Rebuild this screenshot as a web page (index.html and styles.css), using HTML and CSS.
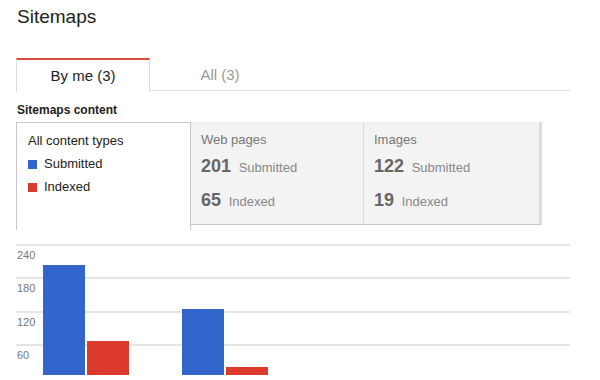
FILE: index.html
```html
<!DOCTYPE html>
<html lang="en" dir="ltr">
  <head>
    <meta charset="utf-8">
    <title>Sitemaps</title>
    <link rel="stylesheet" href="styles.css">
  </head>
  <body>
    <div class="Page">
      <h1 class="Page-Title">Sitemaps</h1>

      <div class="Tabs">
        <div class="Tab Tab-Active">By me (3)</div>
        <div class="Tab">All (3)</div>
      </div>

      <div class="Section-Title">Sitemaps content</div>

      <div class="Cards">
        <div class="Card Card-Active">
          <div class="Card-Label">All content types</div>
          <div class="Legend"><span class="Swatch Swatch-Blue"></span>Submitted</div>
          <div class="Legend"><span class="Swatch Swatch-Red"></span>Indexed</div>
        </div>
        <div class="Card Card-Pages">
          <div class="Card-Label">Web pages</div>
          <div class="Stat"><b>201</b> Submitted</div>
          <div class="Stat"><b>65</b> Indexed</div>
        </div>
        <div class="Card Card-Images">
          <div class="Card-Label">Images</div>
          <div class="Stat"><b>122</b> Submitted</div>
          <div class="Stat"><b>19</b> Indexed</div>
        </div>
      </div>

      <div class="Chart">
        <div class="Chart-Row">240</div>
        <div class="Chart-Row">180</div>
        <div class="Chart-Row">120</div>
        <div class="Chart-Row">60</div>
        <div class="Chart-Bars">
          <div class="Bar-Group">
            <div class="Bar Bar-Blue" style="height: 110px"></div>
            <div class="Bar Bar-Red" style="height: 34px"></div>
          </div>
          <div class="Bar-Group">
            <div class="Bar Bar-Blue" style="height: 66px"></div>
            <div class="Bar Bar-Red" style="height: 8px"></div>
          </div>
        </div>
      </div>
    </div>
  </body>
</html>
```

FILE: styles.css
```css
body {
  margin: 0;
  padding: 0;
  background: #fff;
  font-family: 'Liberation Sans', Arial, sans-serif;
  color: #222;
  overflow: hidden;
}

.Page {
  width: 554px;
  padding-left: 16px;
}

.Page-Title {
  margin: 0;
  padding: 6px 0 0 1px;
  font-size: 19px;
  font-weight: normal;
  line-height: 22px;
  color: #222;
}

.Tabs {
  display: flex;
  margin-top: 30px;
  height: 32px;
  border-bottom: 1px solid #e2e2e2;
}

.Tab {
  display: flex;
  align-items: center;
  justify-content: center;
  width: 140px;
  height: 32px;
  font-size: 15px;
  color: #999;
}

.Tab-Active {
  width: 132px;
  height: 31px;
  margin-bottom: -1px;
  padding-bottom: 1px;
  border-top: 2px solid #dd4b39;
  border-left: 1px solid #ddd;
  border-right: 1px solid #ddd;
  background: #fff;
  color: #222;
  box-sizing: content-box;
}

.Section-Title {
  margin-top: 12px;
  padding-left: 1px;
  font-size: 12px;
  font-weight: bold;
  line-height: 14px;
  color: #222;
}

.Cards {
  display: flex;
  align-items: flex-start;
  margin-top: 5px;
}

.Card {
  box-sizing: border-box;
  padding: 10px 10px 0;
  font-size: 13px;
}

.Card-Active {
  width: 175px;
  height: 108px;
  border: 1px solid #c8c8c8;
  border-bottom: none;
  background: #fff;
  color: #222;
}

.Card-Pages,
.Card-Images {
  height: 103px;
  background: #f3f3f3;
  border-right: 1px solid #ddd;
  border-bottom: 1px solid #c8c8c8;
  color: #777;
}

.Card-Pages {
  width: 173px;
}

.Card-Images {
  width: 178px;
  border-right: 3px solid #ddd;
}

.Card-Label {
  line-height: 16px;
}

.Card-Active .Card-Label {
  padding-left: 1px;
}

.Legend {
  display: flex;
  align-items: center;
  margin-top: 7px;
  line-height: 16px;
}

.Swatch {
  display: inline-block;
  width: 9px;
  height: 9px;
  margin: 0 7px 0 1px;
}

.Swatch-Blue,
.Bar-Blue {
  background: #3366cc;
}

.Swatch-Red,
.Bar-Red {
  background: #dc3a2c;
}

.Stat {
  margin-top: 4px;
  line-height: 28px;
  font-size: 13px;
  color: #888;
}

.Stat + .Stat {
  margin-top: 4px;
}

.Stat b {
  margin-right: 4px;
  font-size: 18px;
  color: #666;
}

.Chart {
  position: relative;
  margin-top: 14px;
  height: 133px;
}

.Chart-Row {
  box-sizing: border-box;
  height: 33.3px;
  padding: 2px 0 0 1px;
  border-top: 2px solid #e6e6e6;
  font-size: 11px;
  line-height: 14px;
  color: #777;
}

.Chart-Bars {
  position: absolute;
  left: 27px;
  right: 0;
  bottom: 2px;
  display: flex;
  align-items: flex-end;
  gap: 53px;
}

.Bar-Group {
  display: flex;
  align-items: flex-end;
  gap: 2px;
}

.Bar {
  width: 42px;
}
```
